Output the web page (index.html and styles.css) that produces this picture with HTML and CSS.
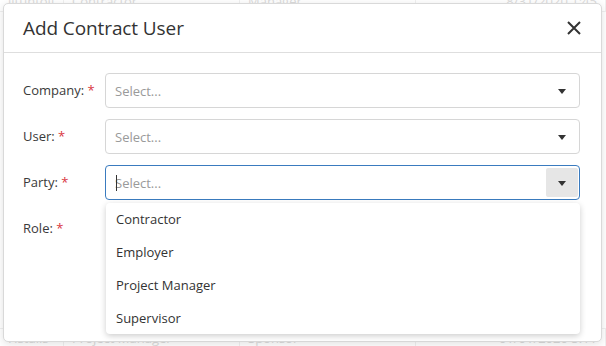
FILE: index.html
```html
<!DOCTYPE html>
<html>
<head>
<meta charset="utf-8">
<link rel="stylesheet" href="styles.css">
</head>
<body>
<div class="page">
  <div class="bg-table">
    <div class="bg-row top">
      <span class="c1">iltuntoll</span><span class="c2">Contractor</span><span class="c3">Manager</span><span class="c4">8/31/2020 1:45</span>
    </div>
    <div class="bg-fill"></div>
    <div class="bg-row bottom">
      <span class="c1">Hstalls</span><span class="c2">Project Manager</span><span class="c3">Sponsor</span><span class="c4">01/01/2020 5:11</span>
    </div>
  </div>
  <div class="modal">
    <div class="modal-header">
      <h2 class="modal-title">Add Contract User</h2>
      <button class="close" aria-label="Close">
        <svg width="14" height="14" viewBox="0 0 14 14"><path d="M1 1 L13 13 M13 1 L1 13" stroke="#333" stroke-width="2" fill="none"/></svg>
      </button>
    </div>
    <div class="modal-body">
      <div class="field">
        <label class="label">Company: <span class="req">*</span></label>
        <div class="select"><span class="ph">Select...</span><span class="arrow"><i class="caret"></i></span></div>
      </div>
      <div class="field">
        <label class="label">User: <span class="req">*</span></label>
        <div class="select"><span class="ph">Select...</span><span class="arrow"><i class="caret"></i></span></div>
      </div>
      <div class="field">
        <label class="label">Party: <span class="req">*</span></label>
        <div class="select-wrap">
          <div class="select focused"><span class="cursor"></span><span class="ph">Select...</span><span class="arrow active"><i class="caret"></i></span></div>
          <ul class="menu">
            <li>Contractor</li>
            <li>Employer</li>
            <li>Project Manager</li>
            <li>Supervisor</li>
          </ul>
        </div>
      </div>
      <div class="field">
        <label class="label">Role: <span class="req">*</span></label>
      </div>
    </div>
  </div>
</div>
</body>
</html>
```

FILE: styles.css
```css
* { box-sizing: border-box; }
html, body { margin: 0; padding: 0; }
body {
  width: 606px;
  height: 346px;
  overflow: hidden;
  font-family: "Segoe UI", "Open Sans", "Noto Sans", sans-serif;
  background: #fff;
  color: #333;
}
.page { position: relative; width: 606px; height: 346px; }

.bg-table {
  display: flex;
  flex-direction: column;
  height: 346px;
  color: #dcdcdc;
  font-size: 13px;
}
.bg-row {
  display: flex;
  height: 22px;
  align-items: center;
  border-bottom: 1px solid #f0f0f0;
}
.bg-row.top { margin-top: -10px; }
.bg-row.bottom { border-top: 1px solid #f0f0f0; border-bottom: none; height: 18px; align-items: flex-start; }
.bg-fill { flex: 1; }
.bg-row span { padding-left: 8px; border-right: 1px solid #f0f0f0; height: 100%; display: flex; align-items: center; }
.c1 { width: 64px; }
.c2 { width: 176px; }
.c3 { width: 176px; }
.c4 { flex: 1; justify-content: flex-end; padding-right: 8px; }

.modal {
  position: absolute;
  left: 3px;
  top: 3px;
  width: 599px;
  height: 339px;
  background: #fff;
  border: 1px solid #d9d9d9;
  border-radius: 5px;
  box-shadow: 0 2px 8px rgba(0,0,0,0.12);
}
.modal-header {
  display: flex;
  align-items: center;
  justify-content: space-between;
  height: 49px;
  padding: 0 20px 0 19px;
  border-bottom: 1px solid #dedede;
}
.modal-title {
  margin: 0;
  font-weight: 400;
  font-size: 19px;
  color: #333;
  letter-spacing: -0.1px;
}
.close {
  border: 0;
  background: none;
  padding: 0;
  width: 14px;
  height: 14px;
  display: flex;
}
.modal-body {
  display: flex;
  flex-direction: column;
  gap: 11px;
  padding: 20px 21px 0 19px;
}
.field {
  display: flex;
  align-items: flex-start;
}
.label {
  width: 82px;
  flex: none;
  font-size: 13px;
  line-height: 35px;
  color: #3a3a3a;
}
.req { color: #d9363e; }
.select-wrap { flex: 1; position: relative; }
.select {
  flex: 1;
  height: 35px;
  border: 1px solid #d6d6d6;
  border-radius: 4px;
  display: flex;
  align-items: center;
  padding: 2px 1px 2px 9px;
  position: relative;
}
.select.focused { border-color: #3a7bbf; }
.ph {
  flex: 1;
  font-size: 13px;
  color: #9a9a9a;
}
.cursor {
  position: absolute;
  left: 10px;
  top: 9px;
  width: 1px;
  height: 16px;
  background: #333;
}
.arrow {
  width: 32px;
  height: 100%;
  display: flex;
  align-items: center;
  justify-content: center;
  border-radius: 2px;
}
.arrow.active { background: #e6e6e6; }
.caret {
  width: 0;
  height: 0;
  border-left: 4.5px solid transparent;
  border-right: 4.5px solid transparent;
  border-top: 5px solid #333;
  margin-top: 1px;
}
.menu {
  position: absolute;
  left: 1px;
  right: 0;
  top: 38px;
  margin: 0;
  padding: 0;
  list-style: none;
  background: #fff;
  border-radius: 4px;
  box-shadow: 0 2px 6px rgba(0,0,0,0.2);
  height: 131px;
  z-index: 2;
}
.menu li {
  height: 33px;
  line-height: 33px;
  padding-left: 10px;
  font-size: 13px;
  color: #333;
}
```
